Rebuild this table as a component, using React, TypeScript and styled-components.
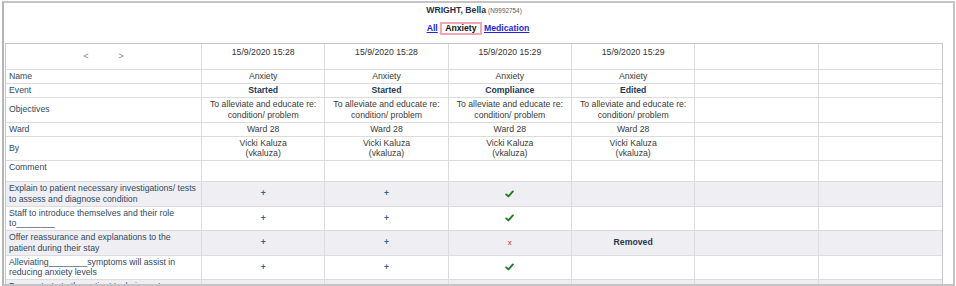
import React, { FC } from "react";
import styled, { createGlobalStyle } from "styled-components";

const GlobalStyle = createGlobalStyle`
  html, body {
    margin: 0;
    padding: 0;
    background: #ffffff;
  }
  body {
    font-family: "Liberation Sans", Arial, sans-serif;
  }
`;

const Frame = styled.div`
  box-sizing: border-box;
  width: 953px;
  height: 285px;
  margin: 1px 0 0 2px;
  padding: 0 10px 0 1px;
  border: 2px solid #c4c4c4;
  border-left-color: #b5b5b5;
  overflow: hidden;
  background: #ffffff;
  font-family: "Liberation Sans", Arial, sans-serif;
  font-size: 8.7px;
`;

const Header = styled.div`
  display: flex;
  flex-direction: column;
  align-items: center;
  padding-top: 1.5px;
`;

const PatientName = styled.div`
  line-height: 11px;
  font-weight: bold;
  color: #1f3347;
`;

const PatientId = styled.span`
  font-weight: normal;
  font-size: 6.4px;
  color: #5a5a5a;
  margin-left: 2px;
`;

const FilterBar = styled.div`
  margin-top: 6px;
  line-height: 13px;
  padding-left: 8px;
`;

const FilterLink = styled.a`
  color: #2424d4;
  font-weight: bold;
  text-decoration: underline;
  cursor: pointer;
`;

const ActiveFilter = styled.span`
  display: inline-block;
  box-sizing: border-box;
  height: 13px;
  line-height: 8.5px;
  padding: 0 3px;
  border: 2.2px solid #f2a6b6;
  color: #111111;
  font-weight: bold;
  vertical-align: top;
`;

const Grid = styled.table`
  width: 938px;
  margin-top: 8.5px;
  border-collapse: separate;
  border-spacing: 0;
  border: 1px solid #c6c6c6;
  table-layout: fixed;
`;

const Row = styled.tr<{ $shaded?: boolean }>`
  background: ${(p) => (p.$shaded ? "#efeff3" : "#ffffff")};
`;

const Cell = styled.td`
  box-sizing: border-box;
  padding: 1px 3px 1.5px;
  line-height: 10.5px;
  border-right: 1px solid #dcdcdc;
  border-bottom: 1px solid #dcdcdc;
  &:last-child {
    border-right: none;
  }
`;

const HeadCell = styled(Cell)`
  height: 26px;
  text-align: center;
  vertical-align: top;
  color: #333333;
  padding-top: 3px;
`;

const Pager = styled(HeadCell)`
  vertical-align: middle;
  color: #808080;
  padding-top: 1px;
`;

const PagerArrow = styled.span`
  display: inline-block;
  margin: 0 15px;
`;

const LabelCell = styled(Cell)<{ $top?: boolean }>`
  color: #30495f;
  vertical-align: ${(p) => (p.$top ? "top" : "middle")};
`;

const DataCell = styled(Cell)<{ $height?: number }>`
  text-align: center;
  vertical-align: middle;
  color: #3a3a3a;
  height: ${(p) => (p.$height ? `${p.$height}px` : "auto")};
`;

const Strong = styled.span`
  font-weight: bold;
  color: #1d3a52;
`;

const Plus = styled.span`
  color: #2d6490;
  font-size: 8.5px;
  font-weight: bold;
`;

const Cross = styled.span`
  color: #a83232;
  font-size: 8px;
`;

const CheckMark: FC = () => (
  <svg width="9" height="8" viewBox="0 0 9 8" style={{ verticalAlign: "middle" }}>
    <path
      d="M1.2 4.4 L3.4 6.4 L7.9 1.4"
      fill="none"
      stroke="#1c7a24"
      strokeWidth="1.9"
      strokeLinecap="round"
      strokeLinejoin="round"
    />
  </svg>
);

type Mark = "plus" | "check" | "cross" | "removed" | "";

const dates = ["15/9/2020 15:28", "15/9/2020 15:28", "15/9/2020 15:29", "15/9/2020 15:29", "", ""];

const infoRows: { label: string; values: React.ReactNode[]; top?: boolean; height?: number }[] = [
  { label: "Name", values: ["Anxiety", "Anxiety", "Anxiety", "Anxiety", "", ""] },
  {
    label: "Event",
    values: [
      <Strong>Started</Strong>,
      <Strong>Started</Strong>,
      <Strong>Compliance</Strong>,
      <Strong>Edited</Strong>,
      "",
      "",
    ],
  },
  {
    label: "Objectives",
    values: Array.from({ length: 4 }, () => (
      <>
        To alleviate and educate re:
        <br />
        condition/ problem
      </>
    )).concat(["", ""]),
  },
  { label: "Ward", values: ["Ward 28", "Ward 28", "Ward 28", "Ward 28", "", ""] },
  {
    label: "By",
    values: Array.from({ length: 4 }, () => (
      <>
        Vicki Kaluza
        <br />
        (vkaluza)
      </>
    )).concat(["", ""]),
  },
  { label: "Comment", values: ["", "", "", "", "", ""], top: true, height: 21 },
];

const interventions: { label: React.ReactNode; marks: Mark[] }[] = [
  {
    label: (
      <>
        Explain to patient necessary investigations/ tests
        <br />
        to assess and diagnose condition
      </>
    ),
    marks: ["plus", "plus", "check", "", "", ""],
  },
  {
    label: (
      <>
        Staff to introduce themselves and their role
        <br />
        to________
      </>
    ),
    marks: ["plus", "plus", "check", "", "", ""],
  },
  {
    label: (
      <>
        Offer reassurance and explanations to the
        <br />
        patient during their stay
      </>
    ),
    marks: ["plus", "plus", "cross", "removed", "", ""],
  },
  {
    label: (
      <>
        Alleviating________symptoms will assist in
        <br />
        reducing anxiety levels
      </>
    ),
    marks: ["plus", "plus", "check", "", "", ""],
  },
  {
    label: (
      <>
        Demonstrate to the patient techniques to
        <br />
        manage their anxiety
      </>
    ),
    marks: ["plus", "plus", "check", "", "", ""],
  },
];

const renderMark = (m: Mark) => {
  switch (m) {
    case "plus":
      return <Plus>+</Plus>;
    case "check":
      return <CheckMark />;
    case "cross":
      return <Cross>x</Cross>;
    case "removed":
      return <Strong>Removed</Strong>;
    default:
      return null;
  }
};

const CarePlanHistory: FC = () => {
  return (
    <Frame>
      <Header>
        <PatientName>
          WRIGHT, Bella<PatientId>(N9992754)</PatientId>
        </PatientName>
        <FilterBar>
          <FilterLink>All</FilterLink> <ActiveFilter>Anxiety</ActiveFilter>{" "}
          <FilterLink>Medication</FilterLink>
        </FilterBar>
      </Header>
      <Grid>
        <colgroup>
          <col style={{ width: 196 }} />
          <col />
          <col />
          <col />
          <col />
          <col />
          <col />
        </colgroup>
        <tbody>
          <tr>
            <Pager>
              <PagerArrow>&lt;</PagerArrow>
              <PagerArrow>&gt;</PagerArrow>
            </Pager>
            {dates.map((d, i) => (
              <HeadCell key={i}>{d}</HeadCell>
            ))}
          </tr>
          {infoRows.map((r) => (
            <Row key={r.label}>
              <LabelCell $top={r.top}>{r.label}</LabelCell>
              {r.values.map((v, i) => (
                <DataCell key={i} $height={r.height}>
                  {v}
                </DataCell>
              ))}
            </Row>
          ))}
          {interventions.map((r, idx) => (
            <Row key={idx} $shaded={idx % 2 === 0}>
              <LabelCell>{r.label}</LabelCell>
              {r.marks.map((m, i) => (
                <DataCell key={i}>{renderMark(m)}</DataCell>
              ))}
            </Row>
          ))}
        </tbody>
      </Grid>
    </Frame>
  );
};

export default function App() {
  return (
    <>
      <GlobalStyle />
      <CarePlanHistory />
    </>
  );
}
